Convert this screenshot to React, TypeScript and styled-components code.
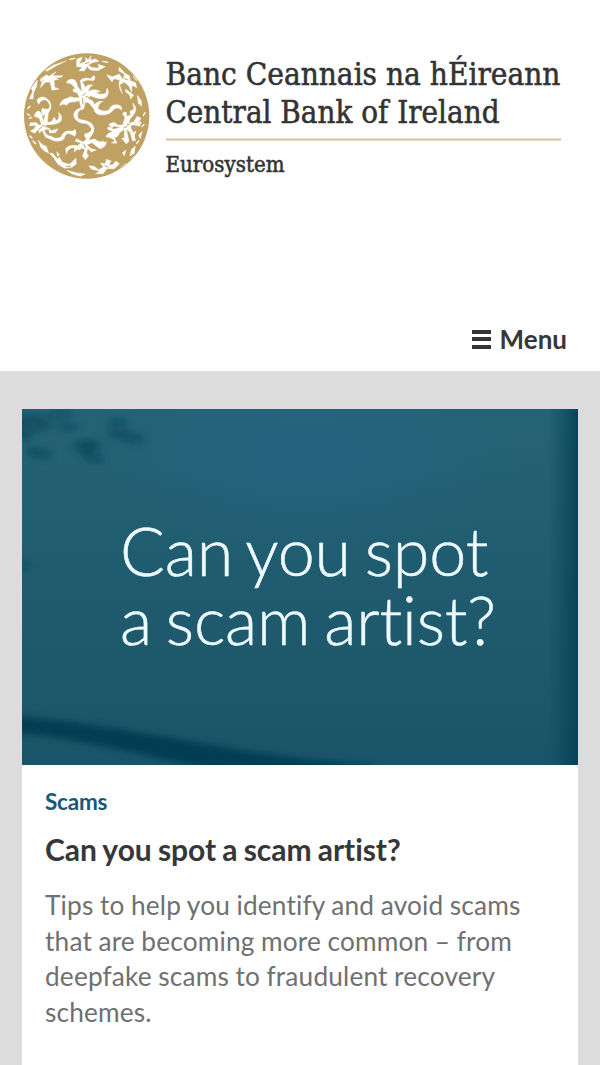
import styled, { createGlobalStyle } from 'styled-components';

const GlobalStyle = createGlobalStyle`
  * {
    box-sizing: border-box;
    margin: 0;
  }
  body {
    background-color: #dcdcdc;
    color: #363738;
    font-family: Lato, sans-serif;
    font-variant-ligatures: none;
  }
`;

const Page = styled.div`
  height: 1065px;
  overflow: hidden;
`;

const Header = styled.header`
  height: 371px;
  padding: 45px 33px 14px 15px;
  display: flex;
  flex-direction: column;
  justify-content: space-between;
  background-color: #fff;
`;

const Brand = styled.a`
  display: flex;
  color: #333;
`;

const WordmarkSvg = styled.svg`
  flex-shrink: 0;
  overflow: visible;
`;

const MenuButton = styled.button`
  display: flex;
  align-items: center;
  align-self: flex-end;
  gap: 9px;
  padding: 0;
  border: none;
  background: none;
  color: #363738;
  font-family: inherit;
  font-size: 26px;
  font-weight: 700;
  line-height: 36px;
`;

const Bars = styled.span`
  width: 19px;
  height: 19px;
  display: flex;
  flex-direction: column;
  justify-content: space-between;
`;

const Bar = styled.span`
  height: 4px;
  background-color: #343536;
`;

const Main = styled.main`
  padding: 37.5px 22px 0;
`;

const Card = styled.article`
  background-color: #fff;
  height: 700px;
`;

const Hero = styled.div`
  position: relative;
  height: 356.5px;
  overflow: hidden;
  background-color: #205c70;
`;

const HeroArt = styled.svg`
  position: absolute;
  inset: 0;
  width: 100%;
  height: 100%;
`;

const HeroTitle = styled.p`
  position: relative;
  padding: 107.5px 0 0 98px;
  color: #eefaff;
  font-size: 66.5px;
  font-weight: 300;
  line-height: 69px;
  letter-spacing: -0.2px;
  word-spacing: -4px;
  white-space: nowrap;
  -webkit-text-stroke: 0.5px #eefaff;
`;

const CardBody = styled.div`
  padding: 22px 23px;
`;

const Category = styled.p`
  color: #17587a;
  font-size: 22.5px;
  font-weight: 700;
  line-height: 30px;
  letter-spacing: -0.2px;
`;

const Title = styled.h2`
  margin-top: 12px;
  font-size: 30px;
  font-weight: 700;
  line-height: 40px;
  letter-spacing: -0.05px;
  word-spacing: -1px;
`;

const Summary = styled.p`
  margin-top: 19px;
  color: #707070;
  font-size: 26.25px;
  line-height: 35.7px;
  letter-spacing: 0.16px;
  word-spacing: -0.4px;
`;

function Roundel() {
  return (
    <svg width='145' height='145' viewBox='0 0 435 435'>
      <clipPath id='disc'>
        <circle cx='215' cy='213' r='186' />
      </clipPath>
      <circle cx='215' cy='213' r='188' fill='#bfa263' />
      <g clipPath='url(#disc)' fill='#fff' stroke='#fff' strokeWidth='1.2'>
        {/* centre */}
        <path d='M154 113Q159 101 174 103Q186 106 187 123L201 142L196 106Q207 115 211 128Q216 117 233 120Q220 128 220 141Q232 128 257 139L244 142Q255 152 273 144L276 129Q286 145 271 159Q252 165 226 152L219 163Q235 163 238 179Q248 167 264 169Q249 176 249 191Q264 203 282 195Q287 178 306 179Q322 180 320 195Q311 185 298 191Q287 209 264 210Q240 211 236 191L222 174L211 171L206 192L195 195Q182 207 191 222L216 228Q242 237 236 260Q231 275 214 280Q205 273 210 266Q226 266 230 252Q221 233 201 235Q174 226 176 207Q181 192 198 189L193 167L177 171Q161 169 155 181Q146 174 134 182Q138 162 157 160Q165 151 176 158L194 158L186 143L175 140L174 132L181 132Q171 113 154 113Z' />
        <path d='M197 105Q210 94 229 102Q230 93 238 92Q243 103 234 107Q216 101 200 112Z' />
        {/* left */}
        <path d='M62 203Q72 191 79 207L85 229L92 205L84 213Q76 200 82 189Q94 196 103 190Q108 175 91 164Q75 165 72 178Q60 165 73 158Q89 150 104 169Q114 187 100 204L97 231Q112 235 116 217Q122 219 123 228Q135 223 131 202Q144 213 139 227Q128 240 96 239L90 247Q103 247 108 257L130 251L121 263L104 264L101 252L87 255Q94 275 109 273Q119 284 137 277Q147 252 172 259L180 253Q186 262 180 274Q170 268 158 265Q149 270 147 282Q132 294 111 285L91 276L81 256L73 265L71 252L59 265L46 258L57 252L63 241L43 242L46 233L64 233L73 241L79 238L73 220L57 213Z' />
        {/* bottom centre */}
        <path d='M152 311Q163 298 188 302L198 293L181 289L184 281L204 291L211 286L222 262L231 267L221 286L239 282Q256 296 263 287Q268 296 274 289Q274 309 254 311L231 293L215 299L229 311L244 315L229 321L218 310L215 325L221 332L211 344L202 333L210 314L200 309L193 316L189 311L178 321L179 309Q167 305 158 317L154 328Z' />
        {/* right */}
        <path d='M281 237L297 232L309 240L323 240L330 216L322 207Q327 198 334 202L335 214L347 211L345 199L357 193L353 174Q369 188 358 206L345 223L341 235L357 230L366 214L378 220L371 232L379 231L374 244L356 239L346 244L354 263L363 258L358 273L362 287L352 287L346 263L334 252L342 289L334 297L320 280L328 279L328 253L314 263Q308 278 298 277L306 295L289 294L300 288Q291 277 273 276Q276 262 295 260L278 253Q276 237 295 253L317 247L295 243L291 249Z' />
        {/* upper right */}
        <path d='M275 89L292 95L313 87L324 104L328 87L311 77L313 66L330 85L344 93L346 107L362 113L365 128L351 121L350 142L342 124L328 111L314 119L322 146Q308 127 314 105L297 101L291 111Z' />
        <path d='M332 132L356 151L347 162Q346 147 332 141ZM367 151L379 167L380 184L370 175Z' />
        {/* top */}
        <path d='M185 43L202 36L193 57L213 49L211 37L219 44L229 32L225 45L242 42L252 49L231 53L220 61L232 68L252 69L249 58L271 65L248 77L226 75L216 64L209 77L191 78L202 67L185 65Z' />
        {/* upper left */}
        <path d='M77 101L95 89L101 94L123 81L113 92L144 92L138 97L120 98L131 103L117 106L119 127L133 132L111 136L105 111L91 112L76 128L81 111L91 102L77 110Z' />
        <path d='M91 76L116 60L154 48L124 62L96 79ZM48 128L67 105L65 125L55 143ZM43 161L57 132L54 162Z' />
        {/* lower left */}
        <path d='M70 286L82 299L94 304L101 324L88 318L77 307ZM103 325L113 325L128 342L122 344ZM118 342L128 342L133 336L142 352L164 358L183 339L184 357L171 367L149 370L129 358Z' />
        <path d='M125 320L134 329L128 334ZM155 376Q180 384 211 387L196 394Q170 389 155 376Z' />
        {/* lower right */}
        <path d='M221 362L237 364L251 374L265 366L256 354L271 356L274 343L289 348L281 359L292 360L303 348L313 356L298 371L276 371L264 386L242 386L254 378L230 373ZM322 323L333 315L328 333ZM350 313L361 303L358 325L344 333ZM371 271L381 259L376 281Z' />
        <g strokeWidth='4' strokeLinecap='round' fill='none'>
          <path d='M39 190L45 184M37 207L44 211M43 220L50 217M45 273L51 279M54 288L62 296M165 43L179 40M263 49L278 52M318 369L334 356M348 345L359 332M365 295L371 288M385 211L390 203M381 245L387 238M356 94L365 105' />
        </g>
        <g
          stroke='#bfa263'
          strokeWidth='3'
          strokeLinecap='round'
          fill='none'
        >
          <path d='M211 146L203 151M213 155L222 157M203 160L204 177M82 242L91 243M80 247L73 252M206 297L211 308M336 239L343 238M337 244L326 249M154 365L166 363M328 101L337 104M211 56L222 52M270 362L279 366' />
        </g>
      </g>
    </svg>
  );
}

function Wordmark() {
  return (
    <WordmarkSvg
      width='405'
      height='145'
      fill='currentColor'
      stroke='currentColor'
      strokeWidth='0.55'
      fontFamily='"DejaVu Serif Condensed", "DejaVu Serif", serif'
    >
      <text
        x='5.5'
        y='39.5'
        fontSize='32.5'
        textLength='395'
        lengthAdjust='spacingAndGlyphs'
      >
        Banc Ceannais na hÉireann
      </text>
      <text
        x='5.5'
        y='78'
        fontSize='32.5'
        textLength='334'
        lengthAdjust='spacingAndGlyphs'
      >
        Central Bank of Ireland
      </text>
      <rect
        x='6'
        y='93.5'
        width='395'
        height='2'
        fill='#d4c19c'
        stroke='none'
      />
      <text
        x='5.5'
        y='126.7'
        fontSize='22.5'
        textLength='119'
        lengthAdjust='spacingAndGlyphs'
      >
        Eurosystem
      </text>
    </WordmarkSvg>
  );
}

function HeroBackground() {
  return (
    <HeroArt viewBox='0 0 555 356' preserveAspectRatio='none'>
      <defs>
        <linearGradient id='wall' x1='0' y1='0' x2='0' y2='1'>
          <stop offset='0' stopColor='#246375' />
          <stop offset='0.45' stopColor='#205c6f' />
          <stop offset='1' stopColor='#1a5468' />
        </linearGradient>
        <radialGradient id='glow'>
          <stop offset='0' stopColor='#24658a' stopOpacity='0.5' />
          <stop offset='1' stopColor='#24658a' stopOpacity='0' />
        </radialGradient>
        <linearGradient id='edge'>
          <stop offset='0' stopColor='#064357' stopOpacity='0' />
          <stop offset='0.5' stopColor='#064357' stopOpacity='0.45' />
          <stop offset='1' stopColor='#064357' stopOpacity='0.95' />
        </linearGradient>
        <filter id='soft' x='-50%' y='-50%' width='200%' height='200%'>
          <feGaussianBlur stdDeviation='3.5' />
        </filter>
      </defs>
      <rect width='555' height='356' fill='url(#wall)' />
      <ellipse cx='285' cy='48' rx='220' ry='110' fill='url(#glow)' />
      <g fill='#0b4b60' filter='url(#soft)'>
        <ellipse cx='8' cy='14' rx='22' ry='9' opacity='0.75' />
        <ellipse cx='38' cy='5' rx='12' ry='4' opacity='0.7' />
        <ellipse cx='45' cy='18' rx='12' ry='4' opacity='0.6' />
        <ellipse cx='2' cy='27' rx='8' ry='4' />
        <ellipse cx='95' cy='14' rx='10' ry='4' opacity='0.8' />
        <ellipse
          cx='104'
          cy='27'
          rx='19'
          ry='4'
          transform='rotate(14 104 27)'
        />
        <ellipse cx='65' cy='37' rx='13' ry='6' />
        <ellipse
          cx='70'
          cy='48'
          rx='11'
          ry='4'
          transform='rotate(20 70 48)'
        />
        <ellipse
          cx='17'
          cy='44'
          rx='13'
          ry='4'
          transform='rotate(12 17 44)'
        />
        <ellipse cx='2' cy='157' rx='7' ry='4' opacity='0.7' />
      </g>
      <path
        d='M-20 306C45 310 100 320 170 332C230 343 280 351 350 356L350 368L200 361C130 350 80 332 -20 321Z'
        fill='#033e52'
        filter='url(#soft)'
      />
      <rect x='525' width='30' height='356' fill='url(#edge)' />
    </HeroArt>
  );
}

function App() {
  return (
    <Page>
      <GlobalStyle />
      <Header>
        <Brand>
          <Roundel />
          <Wordmark />
        </Brand>
        <MenuButton>
          <Bars>
            <Bar />
            <Bar />
            <Bar />
          </Bars>
          Menu
        </MenuButton>
      </Header>
      <Main>
        <Card>
          <Hero>
            <HeroBackground />
            <HeroTitle>
              Can you spot
              <br />a scam artist?
            </HeroTitle>
          </Hero>
          <CardBody>
            <Category>Scams</Category>
            <Title>Can you spot a scam artist?</Title>
            <Summary>
              Tips to help you identify and avoid scams that are becoming more
              common – from deepfake scams to fraudulent recovery schemes.
            </Summary>
          </CardBody>
        </Card>
      </Main>
    </Page>
  );
}

export default App;
